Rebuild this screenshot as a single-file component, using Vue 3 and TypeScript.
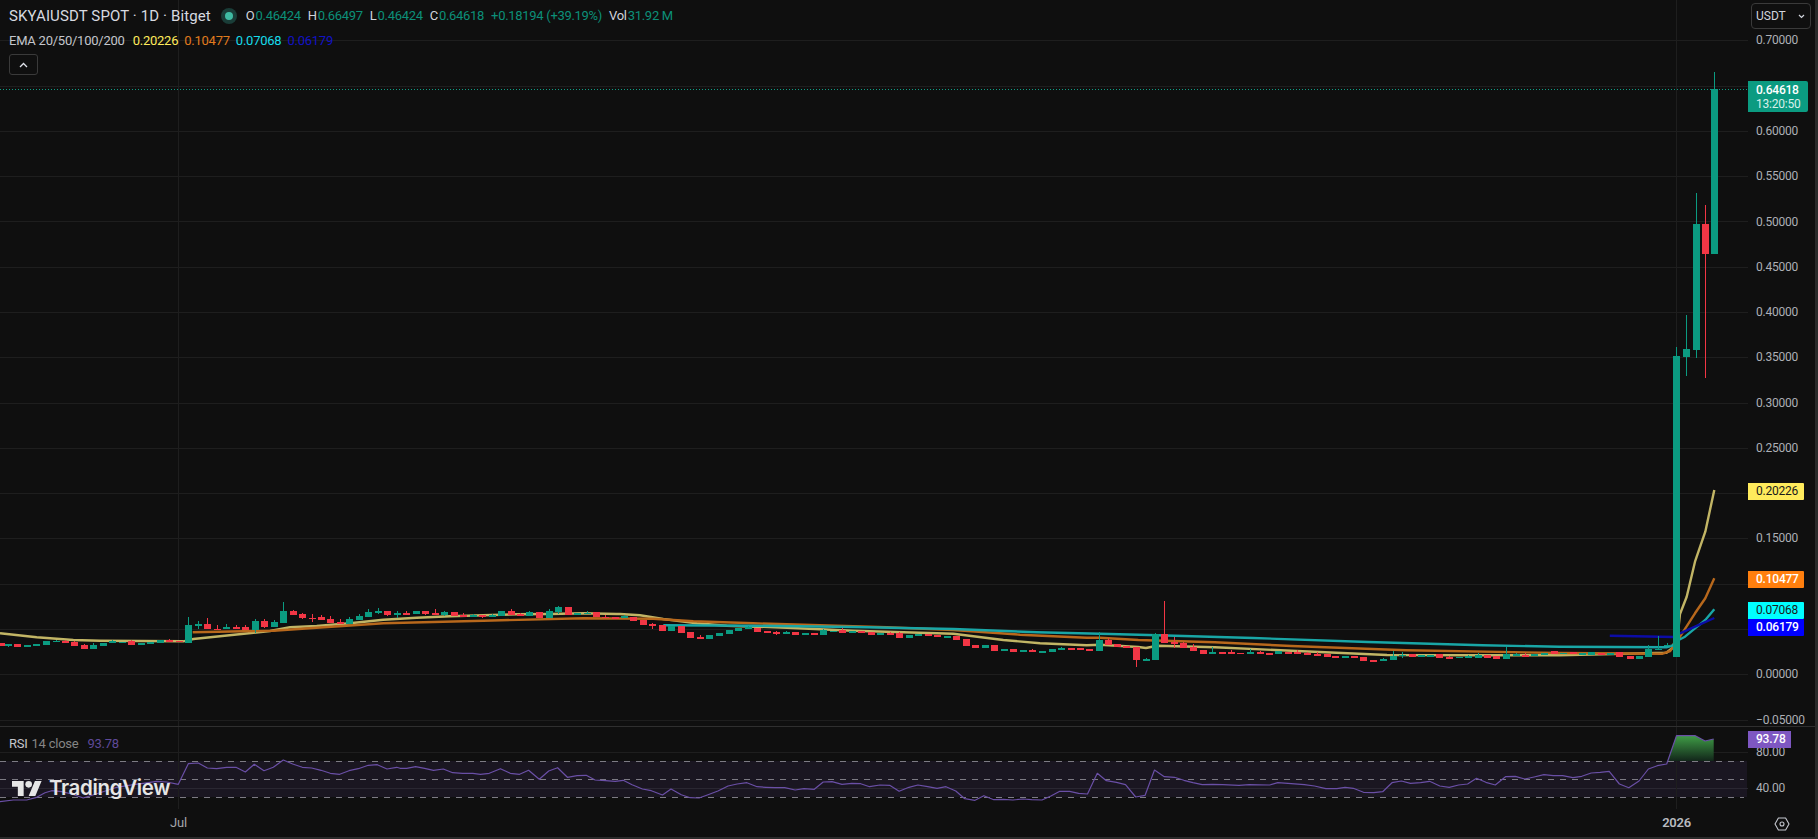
<script setup lang="ts">
import { computed } from 'vue';

type Raw = [number, 0 | 1, number, number, number?, number?];
type Pt = [number, number];

const PRICE_ZERO = 674.3;
const PRICE_STEP = 45.28;
const priceY = (p: number) => PRICE_ZERO - (p / 0.05) * PRICE_STEP;

const priceTicks = ['0.70000', '0.65000', '0.60000', '0.55000', '0.50000', '0.45000', '0.40000', '0.35000', '0.30000', '0.25000', '0.20000', '0.15000', '0.10000', '0.05000', '0.00000', '−0.05000'].map((label) => ({
  label,
  y: priceY(Number(label.replace('−', '-'))),
}));

// these levels sit behind a price tag, the axis drops their label
const coveredTicks = ['0.65000', '0.20000', '0.10000', '0.05000'];
const axisTicks = priceTicks.filter((t) => !coveredTicks.includes(t.label));

const priceTags = [
  { label: '0.20226', y: 483, bg: '#ffeb5c', fg: '#1a1a1a', weight: 400 },
  { label: '0.10477', y: 571, bg: '#ff7f0e', fg: '#ffffff', weight: 500 },
  { label: '0.07068', y: 602, bg: '#00ffff', fg: '#1a1a1a', weight: 400 },
  { label: '0.06179', y: 619, bg: '#0000ff', fg: '#ffffff', weight: 500 },
];

const G = 1 as const;
const R = 0 as const;

// candles read off the chart, [x, up, bodyTop, bodyBottom, wickTop, wickBottom], in crop units
const left: Raw[] = [
  [2, R, 55, 63], [25, G, 58, 63, 57, 65], [52, R, 58, 66], [82, G, 61, 61], [109, G, 58, 62, 56], [139, G, 48, 59], [167, G, 47, 47, 44, 50],
  [194, R, 48, 48, 45, 50], [223, R, 51, 63, 48], [251, R, 59, 71, 56], [280, G, 60, 72, 54], [308, G, 54, 63], [337, G, 49, 49, 46, 52], [365, G, 50, 50],
  [394, R, 47, 60, 45], [422, G, 54, 59], [451, G, 52, 52], [479, G, 46, 53], [508, R, 46, 46, 43, 49], [537, R, 47, 47],
];
const july: Raw[] = [
  [115, G, 135, 188, 112], [143, G, 133, 134, 124, 146], [172, R, 132, 147, 114], [200, R, 146, 147, 136], [229, G, 140, 147, 133], [257, R, 142, 145, 136],
  [286, R, 140, 149, 136], [314, G, 123, 150, 118, 160], [343, R, 123, 141, 118, 144], [371, G, 125, 141, 120], [400, G, 93, 128, 66], [428, R, 93, 104, 90, 106],
  [457, R, 101, 114, 98, 117], [485, R, 113, 114, 102, 125], [512, R, 111, 119, 105], [541, R, 117, 129, 109], [569, R, 126, 127, 117, 133], [598, G, 118, 132, 112],
  [626, G, 108, 119, 102], [655, G, 96, 110, 87], [683, G, 93, 94, 85, 102], [712, R, 93, 104, 93, 107], [740, G, 99, 101, 93, 113], [769, R, 99, 100, 93, 105],
  [797, G, 93, 101], [826, R, 93, 101, 93, 104], [854, R, 100, 104, 88, 105], [883, G, 96, 104, 93, 108], [911, R, 97, 108], [940, R, 106, 107, 100],
  [968, G, 105, 106, 102], [997, R, 106, 107, 104, 115], [1025, G, 105, 111, 102], [1054, G, 94, 108], [1082, R, 93, 105, 88], [1110, R, 103, 104, 98],
  [1138, G, 96, 107, 93], [1167, R, 96, 113], [1196, G, 94, 114, 88], [1225, G, 81, 96, 78, 103], [1253, R, 81, 104], [1281, G, 98, 104], [1310, G, 98, 100, 94],
  [1337, R, 97, 111], [1366, R, 110, 111, 104, 114], [1394, R, 111, 112],
];
const autumn: Raw[] = [
  [12, G, 78, 79, 74, 82], [40, R, 82, 92], [70, R, 90, 104], [97, R, 102, 104, 100, 118], [127, R, 106, 122], [154, G, 108, 122], [184, R, 109, 128], [211, R, 127, 143],
  [240, R, 141, 142, 136, 146], [268, G, 136, 147], [298, G, 129, 138], [326, G, 120, 131], [355, G, 114, 122], [383, G, 111, 112, 107, 115], [412, R, 113, 125], [440, R, 124, 125],
  [469, R, 127, 128, 122, 134], [497, G, 127, 128, 124], [526, R, 126, 135], [554, G, 130, 131], [583, R, 130, 131, 130, 134], [610, G, 121, 134, 117], [639, G, 122, 123],
  [667, R, 120, 128, 115], [696, G, 123, 124, 123, 128], [724, R, 123, 124, 123, 128], [752, R, 125, 135], [781, G, 129, 130], [809, R, 129, 130, 125, 133], [838, R, 129, 144, 125],
  [866, G, 136, 144], [895, G, 133, 138], [923, R, 133, 134], [952, R, 135, 140], [980, G, 139, 140], [1009, R, 138, 150], [1037, R, 148, 168], [1066, R, 165, 174], [1094, G, 166, 174],
  [1123, R, 166, 183], [1151, G, 178, 179], [1180, R, 177, 186], [1208, G, 181, 182], [1237, R, 180, 186, 177], [1265, G, 184, 185, 184, 188], [1295, G, 177, 186], [1323, G, 174, 179, 171],
  [1352, R, 175, 176], [1380, R, 175, 180], [1408, R, 178, 179], [1436, G, 151, 183, 127], [1463, R, 150, 165, 145], [1491, R, 162, 171],
];
const winter: Raw[] = [
  [69, R, 167, 174], [95, R, 172, 209, 172, 230], [120, G, 208, 209, 205, 212], [145, G, 133, 210, 128], [168, R, 132, 158, 33, 160], [194, R, 157, 158, 140, 173], [218, R, 160, 174, 157],
  [244, R, 170, 183, 163], [268, R, 180, 191], [293, G, 186, 187, 170, 190], [318, R, 186, 187], [343, R, 186, 187, 180, 191], [367, R, 188, 189], [392, G, 186, 187, 178, 193], [417, R, 187, 188, 182],
  [442, R, 189, 190], [466, G, 183, 191], [492, R, 186, 187], [516, R, 186, 187, 181], [541, R, 190, 191, 186, 193], [566, R, 193, 194, 187, 197], [592, R, 192, 201], [615, R, 199, 200], [640, G, 199, 200],
  [665, R, 198, 204], [688, R, 201, 213], [714, R, 211, 212, 211, 214], [739, G, 207, 208, 204, 210], [765, G, 197, 210, 183], [790, G, 194, 195, 185, 203], [814, R, 193, 201], [838, G, 196, 201], [862, G, 195, 196],
  [886, R, 193, 204], [912, R, 202, 203, 199, 206], [937, G, 200, 202], [962, G, 199, 201, 195, 203], [987, G, 194, 203, 189], [1012, R, 195, 203], [1036, R, 199, 206], [1061, G, 192, 206, 170], [1086, G, 192, 193, 188, 197],
  [1111, R, 195, 199, 190], [1135, G, 192, 198], [1160, G, 188, 195], [1185, R, 184, 192], [1210, G, 188, 190], [1235, R, 185, 192], [1259, G, 189, 190], [1284, G, 185, 195], [1309, R, 190, 191], [1332, G, 190, 191],
  [1357, R, 186, 201], [1384, R, 198, 207], [1408, G, 198, 206], [1433, G, 177, 201, 165], [1457, G, 176, 180, 138], [1482, G, 164, 168, 160],
];
const breakout: Raw[] = [
  [1676.4, G, 356, 656.7, 346.7], [1686.2, G, 349, 357, 315, 375.7], [1695.7, G, 224, 350, 193, 358], [1705.3, R, 224, 253.7, 205, 378], [1714.3, G, 89, 253.7, 72],
];

const readCrop = (rows: Raw[], x0: number, sx: number, y0: number, sy: number) =>
  rows.map(([x, up, top, bot, wt, wb]) => ({
    x: Math.round(x0 + x / sx),
    up,
    top: y0 + top / sy,
    bot: y0 + bot / sy,
    wickTop: y0 + (wt ?? top) / sy,
    wickBot: y0 + (wb ?? bot) / sy,
  }));

const candles = computed(() => [
  ...readCrop(left, 0, 3, 625, 3),
  ...readCrop(july, 150, 3, 580, 3),
  ...readCrop(autumn, 620, 3, 590, 3),
  ...readCrop(winter, 1100, 2.613, 590, 3),
  ...readCrop(breakout, 0, 1, 0, 1),
]);

const crop = (x0: number, sx: number, y0: number, pts: Pt[]): string[] =>
  pts.map(([x, y]) => `${(x0 + x / sx).toFixed(1)},${(y0 + y / 3).toFixed(1)}`);

const emaLines = [
  {
    color: '#c2b565',
    points: [
      ...crop(0, 3, 610, [[0, 70], [110, 82], [220, 90], [300, 92], [550, 94]]),
      ...crop(150, 3, 580, [[130, 177], [360, 153], [420, 142], [500, 138], [600, 130], [700, 119], [800, 113], [900, 109], [1000, 106], [1100, 103], [1200, 102], [1300, 100], [1400, 102]]),
      ...crop(620, 3, 590, [[0, 72], [60, 76], [130, 87], [230, 100], [320, 107], [500, 113], [700, 122], [900, 128], [1000, 131], [1150, 150], [1260, 160], [1400, 166]]),
      ...crop(1100, 2.613, 590, [[0, 164], [100, 171], [120, 174], [150, 167], [300, 172], [500, 182], [750, 195], [1000, 196], [1200, 196], [1480, 188], [1495, 175], [1510, 130]]),
      ...crop(1600, 3, 440, [[240, 522], [260, 470], [285, 365], [316, 275], [343, 150]]),
    ],
  },
  {
    color: '#b8681c',
    points: [
      ...crop(150, 3, 580, [[128, 157], [370, 152], [500, 143], [700, 130], [1000, 122], [1300, 115]]),
      ...crop(620, 3, 590, [[100, 86], [220, 94], [400, 100], [600, 106], [800, 112], [1000, 120], [1200, 134], [1400, 143]]),
      ...crop(1100, 2.613, 590, [[0, 143], [100, 150], [300, 157], [500, 168], [800, 181], [1200, 189], [1470, 191], [1490, 183]]),
      ...crop(1600, 3, 440, [[240, 590], [285, 520], [316, 475], [343, 415]]),
    ],
  },
  {
    color: '#19a6a6',
    points: [
      ...crop(620, 3, 590, [[130, 106], [400, 107], [700, 111], [1000, 117], [1250, 127]]),
      ...crop(1100, 2.613, 590, [[0, 131], [150, 136], [400, 144], [700, 156], [1000, 166], [1200, 170], [1480, 172], [1500, 165]]),
      ...crop(1600, 3, 440, [[230, 603], [255, 590], [285, 565], [316, 540], [343, 508]]),
    ],
  },
  {
    color: '#0c0ca6',
    points: [
      ...crop(1100, 2.613, 590, [[1332, 137], [1500, 141]]),
      ...crop(1600, 3, 440, [[240, 580], [285, 560], [343, 534]]),
    ],
  },
];

const rsiPoints = [
  ...crop(0, 3, 610, [[0, 575], [40, 570], [80, 570], [110, 562], [135, 548], [155, 542], [185, 545], [215, 552], [250, 564], [300, 548], [350, 532], [400, 524], [430, 520], [470, 514], [500, 516], [535, 523], [565, 461], [595, 459], [622, 474], [650, 476], [680, 472], [708, 472], [736, 486], [763, 463], [792, 482], [820, 472], [850, 450], [878, 462], [907, 472], [935, 474], [963, 481], [991, 490], [1019, 493], [1047, 482], [1075, 476], [1105, 466], [1132, 464], [1161, 477], [1190, 472]]),
  ...crop(400, 2.24, 720, [[0, 145], [15, 145], [35, 140], [55, 145], [75, 151], [97, 147], [118, 158], [140, 160], [163, 160], [180, 163], [200, 160], [225, 146], [247, 160], [268, 163], [288, 151], [312, 178], [333, 153], [353, 143], [375, 172], [397, 167], [417, 166], [437, 180], [460, 182], [482, 184], [500, 181], [520, 194], [543, 207], [563, 212], [588, 225], [607, 207], [630, 224], [650, 233], [670, 234], [690, 224], [712, 213], [735, 198], [755, 192], [777, 188], [800, 200], [820, 202], [840, 203], [862, 203], [885, 210], [905, 206], [928, 208], [948, 186], [968, 185], [990, 193], [1012, 190], [1032, 191], [1052, 200], [1075, 195], [1097, 196], [1118, 214], [1140, 202], [1160, 195], [1182, 200], [1203, 205], [1223, 200], [1245, 213], [1265, 236], [1288, 241], [1308, 227], [1330, 239], [1352, 238], [1373, 240], [1395, 237], [1415, 239], [1438, 240], [1458, 228], [1478, 214], [1500, 214], [1520, 220], [1540, 222]]),
  ...crop(1090, 2.45, 720, [[18, 160], [40, 182], [65, 187], [87, 194], [112, 231], [135, 226], [158, 150], [182, 170], [207, 172], [230, 181], [252, 188], [275, 194], [300, 193], [325, 194], [365, 196], [390, 194], [440, 195], [460, 188], [485, 190], [525, 194], [550, 198], [578, 206], [605, 206], [625, 202], [645, 205], [670, 217], [695, 218], [717, 215], [740, 188], [763, 183], [785, 190], [810, 188], [832, 184], [857, 198], [880, 202], [903, 195], [925, 192], [947, 175], [970, 187], [993, 195], [1018, 170], [1042, 169], [1065, 177], [1088, 171], [1112, 164], [1135, 167], [1158, 167], [1183, 173], [1205, 169], [1228, 159], [1250, 157], [1272, 154], [1297, 192], [1320, 203], [1345, 183], [1368, 147], [1390, 137], [1413, 132], [1437, 47], [1460, 47], [1483, 47], [1507, 63], [1528, 57]]),
].join(' ');

const ohlc = [
  { key: 'O', value: '0.46424' },
  { key: 'H', value: '0.66497' },
  { key: 'L', value: '0.46424' },
  { key: 'C', value: '0.64618' },
];
const emaValues = [
  { value: '0.20226', color: '#ffeb5c' },
  { value: '0.10477', color: '#e07b1e' },
  { value: '0.07068', color: '#16dcea' },
  { value: '0.06179', color: '#1212c4' },
];
</script>

<template>
  <div class="chart-widget">
    <div class="pane-row main-row">
      <div class="plot">
        <svg class="plot-svg" width="1748" height="726" viewBox="0 0 1748 726">
          <g class="crisp">
            <line v-for="t in priceTicks" :key="t.label" class="grid" x1="0" x2="1748" :y1="Math.round(t.y) + 0.5" :y2="Math.round(t.y) + 0.5" />
            <line class="grid" x1="178.5" x2="178.5" y1="0" y2="726" />
            <line class="grid" x1="1676.5" x2="1676.5" y1="0" y2="726" />
          </g>
          <polyline v-for="line in emaLines" :key="line.color" class="ema" :stroke="line.color" :points="line.points.join(' ')" />
          <g class="crisp">
            <g v-for="c in candles" :key="c.x" :fill="c.up ? '#0b9b81' : '#f23645'">
              <rect :x="c.x" :y="c.wickTop" width="1" :height="c.wickBot - c.wickTop" />
              <rect :x="c.x - 3" :y="c.top" width="7" :height="Math.max(c.bot - c.top, 1.5)" />
            </g>
            <line class="last-line" x1="0" x2="1748" y1="89.5" y2="89.5" />
          </g>
        </svg>

        <div class="legend">
          <div class="legend-row title-row">
            <span class="symbol">SKYAIUSDT SPOT · 1D · Bitget</span>
            <span class="market-dot"></span>
            <div class="ohlc">
              <span v-for="item in ohlc" :key="item.key" class="ohlc-item"><b>{{ item.key }}</b>{{ item.value }}</span>
              <span class="ohlc-item">+0.18194 (+39.19%)</span>
              <span class="ohlc-item vol"><b>Vol</b>31.92 M</span>
            </div>
          </div>
          <div class="legend-row ema-row">
            <span class="ema-name">EMA 20/50/100/200</span>
            <span v-for="e in emaValues" :key="e.value" :style="{ color: e.color }">{{ e.value }}</span>
          </div>
          <button class="collapse-btn" aria-label="Collapse indicators">
            <svg width="9" height="6" viewBox="0 0 9 6"><path d="M1 5l3.5-3.5L8 5" fill="none" stroke="#e0e3eb" stroke-width="1.3" /></svg>
          </button>
        </div>
      </div>

      <div class="price-axis">
        <span v-for="t in axisTicks" :key="t.label" class="tick" :style="{ top: t.y + 'px' }">{{ t.label }}</span>
        <button class="currency-btn">
          <span>USDT</span>
          <svg width="7" height="5" viewBox="0 0 7 5"><path d="M1 1l2.5 2.5L6 1" fill="none" stroke="#d1d4dc" stroke-width="1.2" /></svg>
        </button>
        <div class="last-tag"><b>0.64618</b><span>13:20:50</span></div>
        <span v-for="tag in priceTags" :key="tag.label" class="tag" :style="{ top: tag.y + 'px', background: tag.bg, color: tag.fg, fontWeight: tag.weight }">{{ tag.label }}</span>
      </div>
    </div>

    <div class="pane-row rsi-row">
      <div class="plot">
        <svg class="plot-svg" width="1748" height="82" viewBox="0 727 1748 82">
          <defs>
            <linearGradient id="rsi-over" x1="0" x2="0" y1="735" y2="761" gradientUnits="userSpaceOnUse">
              <stop offset="0" stop-color="#409f47" />
              <stop offset="1" stop-color="#12261a" />
            </linearGradient>
          </defs>
          <g class="crisp">
            <rect x="0" y="761" width="1747" height="36" fill="#1a1621" />
            <line class="grid" x1="0" x2="1748" y1="752.5" y2="752.5" />
            <line class="grid rsi-grid" x1="0" x2="1748" y1="788.5" y2="788.5" />
            <line class="grid" x1="178.5" x2="178.5" y1="727" y2="809" />
            <line class="grid" x1="1676.5" x2="1676.5" y1="727" y2="809" />
            <line v-for="y in [761.5, 779.5, 797.5]" :key="y" class="band" x1="0" x2="1744" :y1="y" :y2="y" />
          </g>
          <polygon points="1667.6,761 1676.5,735.7 1686,735.7 1695.3,735.7 1705,741 1713.7,739 1713.7,761" fill="url(#rsi-over)" />
          <polyline class="rsi-line" :points="rsiPoints" />
        </svg>

        <div class="rsi-legend">
          <span class="rsi-name">RSI</span>
          <span class="rsi-args">14 close</span>
          <span class="rsi-value">93.78</span>
        </div>

        <div class="tv-logo">
          <svg width="30" height="15" viewBox="0 4 36 18" fill="#e6e6e6"><path d="M14 22H7V11H0V4h14v18zM28 22h-8l7.5-18h8L28 22z" /><circle cx="20" cy="8" r="4" /></svg>
          <span>TradingView</span>
        </div>
      </div>

      <div class="price-axis">
        <span class="tick" style="top: 25px">80.00</span>
        <span class="tick" style="top: 61px">40.00</span>
        <span class="rsi-tag">93.78</span>
      </div>
    </div>

    <div class="pane-row time-row">
      <div class="time-axis">
        <span class="time-label" style="left: 178.5px">Jul</span>
        <span class="time-label year" style="left: 1676.5px">2026</span>
      </div>
      <div class="settings">
        <svg width="16" height="14" viewBox="0 0 16 14" fill="none" stroke="#c4c7cf" stroke-width="1.1">
          <path d="M4.4 1h7.2L15 7l-3.4 6H4.4L1 7z" stroke-linejoin="round" />
          <circle cx="8" cy="7" r="2" />
        </svg>
      </div>
    </div>
  </div>
</template>

<style scoped>
.chart-widget {
  width: 1815px;
  height: 837px;
  display: flex;
  flex-direction: column;
  background: #0f0f0f;
  color: #d1d4dc;
  font-family: Roboto, "Liberation Sans", sans-serif;
  border-right: 3px solid #2a2a2a;
  border-bottom: 2px solid #2a2a2a;
  overflow: hidden;
}

.pane-row {
  display: flex;
  flex: none;
}
.main-row {
  height: 727px;
  border-bottom: 1px solid #2f2f2f;
  box-sizing: border-box;
}
.rsi-row { height: 82px; }
.time-row { height: 28px; }

.plot {
  position: relative;
  width: 1748px;
  flex: none;
  overflow: hidden;
}
.plot-svg { display: block; }
.crisp { shape-rendering: crispEdges; }

.grid { stroke: #1e1e1e; stroke-width: 1; }
.rsi-grid { stroke: #2a2732; }
.band { stroke: #7d7b84; stroke-width: 1; stroke-dasharray: 6 6; }
.last-line { stroke: #0f9d84; stroke-width: 1; stroke-dasharray: 1 2; }
.ema { fill: none; stroke-width: 2.4; stroke-linejoin: round; }
.rsi-line { fill: none; stroke: #6a4fa6; stroke-width: 1.2; stroke-linejoin: round; }

.legend {
  position: absolute;
  top: 5px;
  left: 9px;
  display: flex;
  flex-direction: column;
  align-items: flex-start;
}
.legend-row {
  display: flex;
  align-items: center;
  white-space: nowrap;
}
.title-row { height: 21px; }
.symbol {
  font-size: 15px;
  letter-spacing: 0.12px;
  color: #d8dae0;
}
.market-dot {
  width: 8px;
  height: 8px;
  margin: 0 13px 0 14px;
  border-radius: 50%;
  background: #3fbaa2;
  box-shadow: 0 0 0 4px #1a3d38;
}
.ohlc {
  display: flex;
  gap: 7px;
  font-size: 13px;
  letter-spacing: -0.3px;
  color: #0c8f79;
}
.ohlc-item b {
  font-weight: 400;
  color: #d1d4dc;
  margin-right: 1px;
}
.ema-row {
  height: 20px;
  margin-top: 4px;
  gap: 6px;
  font-size: 13px;
  letter-spacing: -0.24px;
}
.ema-name {
  color: #c4c6cc;
  margin-right: 2px;
}
.collapse-btn {
  width: 29px;
  height: 21px;
  margin-top: 4px;
  padding: 0;
  display: flex;
  align-items: center;
  justify-content: center;
  background: #0f0f0f;
  border: 1px solid #3a3a3a;
  border-radius: 3px;
}

.price-axis {
  position: relative;
  flex: 1;
  font-size: 12px;
  letter-spacing: -0.22px;
  color: #adafb6;
}
.tick {
  position: absolute;
  left: 8px;
  line-height: 14px;
  margin-top: -7px;
  white-space: nowrap;
}
.currency-btn {
  position: absolute;
  top: 3px;
  left: 3px;
  width: 60px;
  height: 26px;
  padding: 0 5px 0 4px;
  box-sizing: border-box;
  display: flex;
  align-items: center;
  justify-content: space-between;
  background: #0f0f0f;
  color: #d1d4dc;
  border: 1px solid #3a3a3a;
  border-radius: 4px;
  font: inherit;
}
.last-tag {
  position: absolute;
  top: 81px;
  left: 0;
  width: 60px;
  height: 31px;
  padding-left: 8px;
  box-sizing: border-box;
  display: flex;
  flex-direction: column;
  justify-content: center;
  background: #0b9b81;
  color: #fff;
  border-radius: 0 2px 2px 0;
  line-height: 14px;
}
.last-tag b { font-weight: 500; }
.last-tag span { color: #d8f0ea; }
.tag {
  position: absolute;
  left: 0;
  width: 56px;
  height: 17px;
  padding-left: 8px;
  box-sizing: border-box;
  line-height: 17px;
  border-radius: 0 1px 1px 0;
}
.rsi-tag {
  position: absolute;
  top: 4px;
  left: 0;
  width: 43px;
  height: 17px;
  padding-left: 8px;
  box-sizing: border-box;
  line-height: 17px;
  background: #7e57c2;
  color: #fff;
  font-weight: 500;
}

.rsi-legend {
  position: absolute;
  top: 8px;
  left: 9px;
  height: 16px;
  display: flex;
  align-items: center;
  gap: 4px;
  font-size: 13px;
  letter-spacing: -0.24px;
  white-space: nowrap;
}
.rsi-name { color: #c4c6cc; }
.rsi-args { color: #858585; margin-right: 5px; }
.rsi-value { color: #5f4a99; }

.tv-logo {
  position: absolute;
  top: 52px;
  left: 12px;
  display: flex;
  align-items: center;
  gap: 7px;
  color: #e6e6e6;
  font-family: Inter, Roboto, sans-serif;
  font-size: 20.5px;
  font-weight: 600;
  letter-spacing: -0.35px;
  line-height: 18px;
}

.time-axis {
  position: relative;
  width: 1748px;
  flex: none;
  font-size: 13px;
  letter-spacing: -0.24px;
  color: #a3a5ab;
}
.time-label {
  position: absolute;
  top: 6px;
  line-height: 16px;
  transform: translateX(-50%);
}
.time-label.year {
  color: #b9bbc0;
  font-weight: 600;
}
.settings {
  flex: 1;
  display: flex;
  align-items: center;
  justify-content: flex-end;
  padding: 2px 25px 0 0;
}
</style>

<style>
html,
body {
  background: #0f0f0f;
}
</style>
